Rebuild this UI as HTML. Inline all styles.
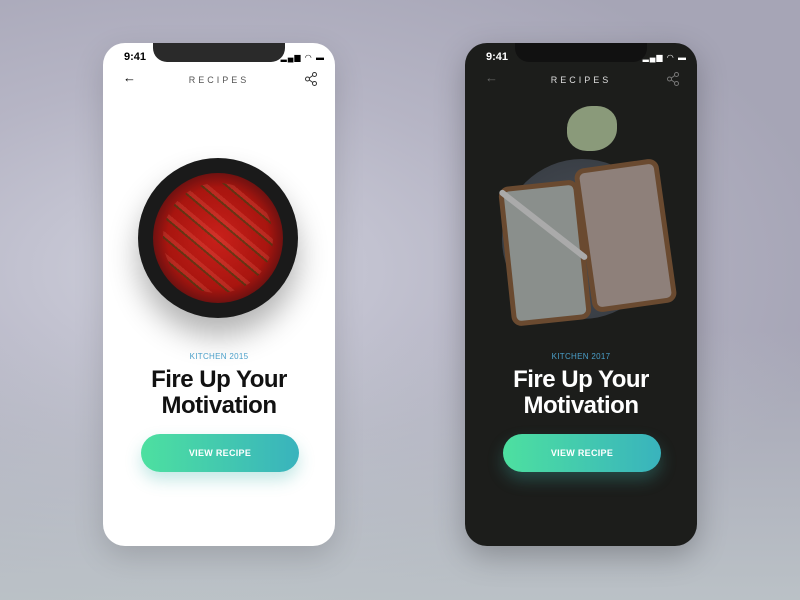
<!DOCTYPE html>
<html><head><style>
body{margin:0;width:800px;height:600px;overflow:hidden;background:radial-gradient(ellipse at 25% 45%,#cfd0dc 0%,#b6b5c5 40%,#a6a5b6 75%),#a9a8b8;position:relative;font-family:"Liberation Sans",sans-serif}
.bg2{position:absolute;left:0;top:0;width:800px;height:600px;background:linear-gradient(180deg,rgba(0,0,0,0) 55%,rgba(195,205,205,.7) 100%)}
.ph{position:absolute;top:43px;width:232px;height:503px;border-radius:22px;overflow:hidden}
.l{left:103px;background:#fff;box-shadow:0 10px 30px rgba(0,0,0,.15)}
.r{left:465px;background:#1c1d1b;box-shadow:0 10px 30px rgba(0,0,0,.25)}
.notch{position:absolute;left:50px;top:0;width:132px;height:19px;background:#2a2a2a;border-radius:0 0 14px 14px}
.time{position:absolute;left:21px;top:8px;font-size:11px;font-weight:bold}
.st{position:absolute;right:10px;top:10px;font-size:8px;letter-spacing:1px}
.hd{position:absolute;top:32px;width:100%;text-align:center;font-size:9px;letter-spacing:3px}
.arr{position:absolute;left:20px;top:27px;font-size:13px}
.sh{position:absolute;right:18px;top:29px}
.kit{position:absolute;top:309px;width:100%;text-align:center;font-size:8px;color:#4a9fc9;letter-spacing:.3px}
.tt{position:absolute;top:324px;width:100%;text-align:center;font-size:24px;font-weight:bold;line-height:26px;letter-spacing:-.5px}
.btn{position:absolute;left:38px;top:391px;width:158px;height:38px;border-radius:19px;background:linear-gradient(90deg,#4de0a0,#39b3bd);color:#fff;font-size:9px;font-weight:bold;text-align:center;line-height:38px;letter-spacing:.3px;box-shadow:0 8px 16px rgba(60,180,170,.3)}
</style></head><body><div class="bg2"></div>
<div class="ph l">
<div class="notch"></div><div class="time">9:41</div><div class="st">▂▄▆ ◠ ▬</div>
<div class="arr">←</div><div class="hd" style="color:#555">RECIPES</div>
<svg class="sh" width="12" height="14" viewBox="0 0 12 14"><g fill="none" stroke="#333" stroke-width="1"><circle cx="2.5" cy="7" r="2"/><circle cx="9.5" cy="2.5" r="2"/><circle cx="9.5" cy="11.5" r="2"/><path d="M4.3 6 7.8 3.5M4.3 8 7.8 10.5"/></g></svg>
<div style="position:absolute;left:35px;top:115px;width:160px;height:160px;border-radius:50%;background:#1a1a1a;box-shadow:0 18px 30px rgba(0,0,0,.3)"></div>
<div style="position:absolute;left:50px;top:130px;width:130px;height:130px;border-radius:50%;background:radial-gradient(circle,#c8201a 0%,#a8150f 55%,#601010 75%,#222 100%)"></div>
<div style="position:absolute;left:60px;top:140px;width:110px;height:110px;border-radius:50%;background:repeating-linear-gradient(40deg,rgba(0,0,0,0) 0 10px,rgba(30,80,20,.5) 10px 12px,rgba(255,120,100,.2) 12px 16px)"></div>
<div class="kit">KITCHEN 2015</div>
<div class="tt" style="color:#111">Fire Up Your<br>Motivation</div>
<div class="btn">VIEW RECIPE</div>
</div>
<div class="ph r">
<div class="notch" style="background:#111"></div><div class="time" style="color:#fff">9:41</div><div class="st" style="color:#fff">▂▄▆ ◠ ▬</div>
<div class="arr" style="color:#666">←</div><div class="hd" style="color:#ddd">RECIPES</div>
<svg class="sh" width="12" height="14" viewBox="0 0 12 14"><g fill="none" stroke="#777" stroke-width="1"><circle cx="2.5" cy="7" r="2"/><circle cx="9.5" cy="2.5" r="2"/><circle cx="9.5" cy="11.5" r="2"/><path d="M4.3 6 7.8 3.5M4.3 8 7.8 10.5"/></g></svg>
<div style="position:absolute;left:102px;top:63px;width:50px;height:45px;border-radius:50% 40% 50% 40%;background:#8a9a7a"></div>
<div style="position:absolute;left:37px;top:116px;width:160px;height:160px;border-radius:50%;background:radial-gradient(circle,#4a5058 0%,#3a3f46 70%,#22262b 100%)"></div>
<div style="position:absolute;left:40px;top:140px;width:70px;height:130px;border-radius:10px;background:#8a8f8c;transform:rotate(-6deg);border:5px solid #6a4a30"></div>
<div style="position:absolute;left:118px;top:120px;width:75px;height:135px;border-radius:10px;background:#8e807a;transform:rotate(-8deg);border:5px solid #6a4a30"></div>
<div style="position:absolute;left:35px;top:145px;width:110px;height:6px;background:#aaa;transform:rotate(38deg);transform-origin:left;border-radius:3px"></div>
<div class="kit">KITCHEN 2017</div>
<div class="tt" style="color:#fff">Fire Up Your<br>Motivation</div>
<div class="btn">VIEW RECIPE</div>
</div>
</body></html>
